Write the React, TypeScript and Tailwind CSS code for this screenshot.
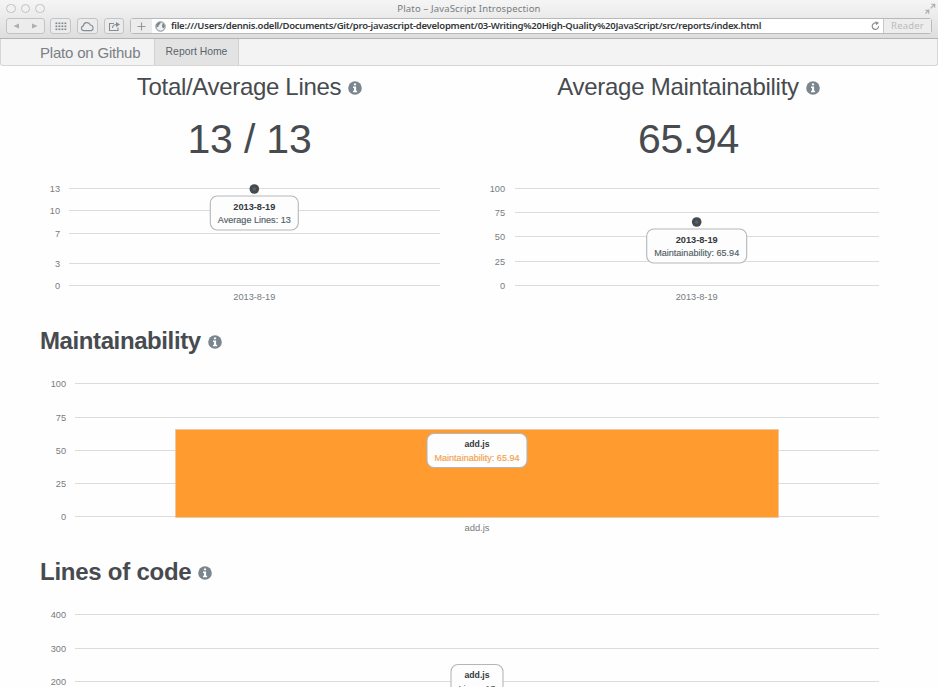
import React from "react";

type Tick = { y: number; label: string };
type Tip = { x: number; y: number; w: number; title: string; text: string; textW: number; titleW: number; color: string };

const SANS = "font-['Liberation_Sans',Arial,sans-serif]";

function Chart(props: {
  width: number;
  height: number;
  labelX: number;
  from: number;
  to: number;
  ticks: Tick[];
  category?: { x: number; y: number; text: string; w: number };
  bar?: { x: number; y: number; w: number; h: number };
  dot?: { x: number; y: number };
  tip: Tip;
}) {
  const { tip } = props;
  return (
    <svg width={props.width} height={props.height} className={`block shrink-0 ${SANS}`}>
      {props.ticks.map((t) => (
        <g key={t.label}>
          <line x1={props.from} x2={props.to} y1={t.y + 0.5} y2={t.y + 0.5} stroke="#dcdcdc" strokeWidth="1.2" />
          <text x={props.labelX} y={t.y + 3.7} textAnchor="end" fontSize="9" fill="#767b7f" textLength={t.label.length * 5.1} lengthAdjust="spacingAndGlyphs">
            {t.label}
          </text>
        </g>
      ))}
      {props.bar && <rect x={props.bar.x} y={props.bar.y} width={props.bar.w} height={props.bar.h} fill="#ff9b2f" stroke="#d8c8b4" strokeWidth="0.5" />}
      {props.dot && (
        <g>
          <circle cx={props.dot.x} cy={props.dot.y} r="4.8" fill="#454a4e" />
          <circle cx={props.dot.x} cy={props.dot.y} r="1.7" fill="#596269" />
        </g>
      )}
      {props.category && (
        <text x={props.category.x} y={props.category.y} textAnchor="middle" fontSize="9" fill="#767b7f" textLength={props.category.w} lengthAdjust="spacingAndGlyphs">
          {props.category.text}
        </text>
      )}
      <rect x={tip.x - tip.w / 2} y={tip.y} width={tip.w} height="34" rx="7" fill="#fdfdfd" stroke="#b4b7b9" strokeWidth="1.1" />
      <text x={tip.x} y={tip.y + 13.8} textAnchor="middle" fontSize="9" fontWeight="bold" fill="#33383c" textLength={tip.titleW} lengthAdjust="spacingAndGlyphs">
        {tip.title}
      </text>
      <text x={tip.x} y={tip.y + 27} textAnchor="middle" fontSize="9" fill={tip.color} stroke={tip.color} strokeWidth="0.15" textLength={tip.textW} lengthAdjust="spacingAndGlyphs">
        {tip.text}
      </text>
    </svg>
  );
}

function Info() {
  return (
    <svg width="14" height="14" viewBox="0 0 14 14" className="mt-[2px] shrink-0">
      <circle cx="7" cy="7" r="6.8" fill="#7b858d" />
      <path d="M5.9 2.4h2.2v1.8H5.9zM5 5.5h3.1v4.3h1v1.4H5V9.8h1V6.9H5z" fill="#fff" />
    </svg>
  );
}

function Button({ width, children }: { width: string; children: React.ReactNode }) {
  return (
    <div className={`flex h-4 items-center justify-center rounded-[3px] border border-[#c3c3c3] bg-[#ececec] ${width}`}>{children}</div>
  );
}

function BrowserChrome() {
  return (
    <header className="h-[39px] shrink-0 border-b border-[#b4b4b4] bg-linear-to-b from-[#f5f5f5] to-[#dedede] font-['Noto_Sans',sans-serif]">
      <div className="flex h-[17px] items-center justify-between pl-[6px] pr-[2px]">
        <div className="flex w-[140px] gap-[5px]">
          <span className="size-[9.5px] rounded-full border border-[#c2c2c2] bg-[#f1f1f1]" />
          <span className="size-[9.5px] rounded-full border border-[#c2c2c2] bg-[#f1f1f1]" />
          <span className="size-[9.5px] rounded-full border border-[#c2c2c2] bg-[#f1f1f1]" />
        </div>
        <div className="-ml-[4px] whitespace-nowrap text-[9.5px] leading-none tracking-[0.16px] text-[#777b7e]">Plato – JavaScript Introspection</div>
        <div className="flex w-[140px] justify-end">
          <svg width="12" height="12" viewBox="0 0 12 12" fill="none" stroke="#aaa" strokeWidth="1.1">
            <path d="M6.7 5.3 10.5 1.5M7.3 1.3h3.4v3.4M5.3 6.7 1.5 10.5M1.3 7.3h3.4v3.4" />
          </svg>
        </div>
      </div>
      <div className="flex h-[18px] items-center pl-[6px] pr-[6px]">
        <div className="flex h-4 w-[39px] items-center rounded-[3px] border border-[#c3c3c3] bg-[#ececec]">
          <svg width="37" height="14" viewBox="0 0 37 14" fill="#aeaeae">
            <path d="M6.5 7l5.5-2.6v5.2zM30.5 7L25 4.4v5.2z" />
          </svg>
        </div>
        <div className="ml-[5px] flex gap-[6px]">
          <Button width="w-[21px]">
            <svg width="12" height="9" viewBox="0 0 12 9" fill="#7d858b">
              {[0, 3, 6].map((y) => [0, 3, 6, 9].map((x) => <rect key={`${x}-${y}`} x={x + 0.5} y={y + 0.5} width="1.8" height="1.6" />))}
            </svg>
          </Button>
          <Button width="w-[21px]">
            <svg width="15" height="11" viewBox="0 0 15 11" fill="none" stroke="#868d92" strokeWidth="1.2">
              <path d="M3.600 9.700a2.500 2.500 0 0 1-.3-4.900A3.700 3.700 0 0 1 10.400 4a3 3 0 0 1 1 5.700z" />
            </svg>
          </Button>
          <Button width="w-[20px]">
            <svg width="13" height="11" viewBox="0 0 13 11" fill="none" stroke="#868d92" strokeWidth="1.1">
              <path d="M6 2.5H1.5v7h8.500V6.500M4.500 7c0-2.200 1.500-3.500 4-3.500" />
              <path d="M8 1l4 2.600L8 6z" fill="#868d92" stroke="none" />
            </svg>
          </Button>
        </div>
        <div className="ml-[6px] flex h-4 min-w-0 flex-1 rounded-[3px] border border-[#b9b9b9] bg-white">
          <div className="flex w-[21px] shrink-0 items-center justify-center bg-[#ececec]">
            <svg width="9" height="9" viewBox="0 0 9 9" stroke="#92979b" strokeWidth="1.1">
              <path d="M4.500 .5v8M.5 4.500h8" />
            </svg>
          </div>
          <div className="flex min-w-0 flex-1 items-center pl-[3px]">
            <svg width="11" height="11" viewBox="0 0 11 11" className="shrink-0">
              <circle cx="5.500" cy="5.500" r="4.700" fill="#eef0f1" stroke="#7c858b" />
              <path d="M1.200 3.600Q2.500.9 5.700 1L5.200 3.200 3.600 4 3.800 5.400 1.700 6.500zM7.500 2l1.700 1.500.6 2-1.500 2-1.300-1.800z" fill="#7c858b" />
            </svg>
            <div className="ml-[5px] whitespace-nowrap text-[9.5px] font-semibold leading-none tracking-[-0.26px] text-[#33383b]">
              file:///Users/dennis.odell/Documents/Git/pro-javascript-development/03-Writing%20High-Quality%20JavaScript/src/reports/index.html
            </div>
          </div>
          <div className="flex w-[16px] items-center justify-center">
            <svg width="9" height="10" viewBox="0 0 9 10" fill="none" stroke="#898e92" strokeWidth="1.200">
              <path d="M7.600 5.200A3.200 3.200 0 1 1 5.800 2.300" />
              <path d="M4.500.2 8 1.800 5.300 4.200z" fill="#898e92" stroke="none" />
            </svg>
          </div>
          <div className="flex w-[48px] items-center justify-center border-l border-[#c8c8c8] bg-[#ededed] text-[9.500px] leading-none tracking-[0.2px] text-[#bbb]">Reader</div>
        </div>
      </div>
    </header>
  );
}

export default function App() {
  return (
    <div className={`flex h-[687px] w-[938px] flex-col overflow-hidden bg-[#fefefe] text-[#474b4f] ${SANS}`}>
      <BrowserChrome />
      <nav className="flex h-[27px] shrink-0 items-stretch rounded-b-[3px] border border-t-0 border-[#d6d6d6] bg-[#f3f3f3] pl-[39px]">
        <div className="flex w-[114px] items-center whitespace-nowrap pt-px text-[15px] leading-none tracking-[-0.2px] text-[#7a8085]">Plato on Github</div>
        <div className="flex w-[85px] items-center justify-center whitespace-nowrap border-x border-[#d0d0d0] bg-[#e3e3e3] text-[10.400px] leading-none text-[#59636b]">
          Report Home
        </div>
      </nav>

      <main className="flex flex-col pl-[40px] pt-[4px]">
        <section className="grid shrink-0 grid-cols-[419px_419px] gap-[20px]">
          <div className="flex flex-col">
            <div className="flex h-[34px] items-center justify-center gap-[7px]">
              <h3 className="whitespace-nowrap text-[24px] leading-none tracking-[-0.32px]">Total/Average Lines</h3>
              <Info />
            </div>
            <div className="flex h-[70px] items-center justify-center text-[41px] leading-none tracking-[-0.2px]">13 / 13</div>
            <Chart
              width={419} height={130} labelX={20} from={29} to={400}
              ticks={[{ y: 14, label: "13" }, { y: 36, label: "10" }, { y: 59, label: "7" }, { y: 89, label: "3" }, { y: 111, label: "0" }]}
              dot={{ x: 214.300, y: 15 }}
              category={{ x: 214.300, y: 125.500, text: "2013-8-19", w: 42 }}
              tip={{ x: 214.300, y: 22, w: 88, title: "2013-8-19", titleW: 42, text: "Average Lines: 13", textW: 73, color: "#515d66" }}
            />
          </div>
          <div className="flex flex-col">
            <div className="flex h-[34px] items-center justify-center gap-[7px]">
              <h3 className="whitespace-nowrap text-[24px] leading-none tracking-[-0.26px]">Average Maintainability</h3>
              <Info />
            </div>
            <div className="flex h-[70px] items-center justify-center text-[41px] leading-none tracking-[-0.3px]">65.94</div>
            <Chart
              width={419} height={130} labelX={26} from={36} to={400}
              ticks={[{ y: 14, label: "100" }, { y: 38, label: "75" }, { y: 62, label: "50" }, { y: 87, label: "25" }, { y: 111, label: "0" }]}
              dot={{ x: 217.700, y: 48 }}
              category={{ x: 217.700, y: 125.500, text: "2013-8-19", w: 42 }}
              tip={{ x: 217.700, y: 55, w: 100, title: "2013-8-19", titleW: 42, text: "Maintainability: 65.94", textW: 85, color: "#515d66" }}
            />
          </div>
        </section>

        <section className="flex shrink-0 flex-col pt-[19px]">
          <div className="flex h-[35px] items-center gap-[7px]">
            <h2 className="whitespace-nowrap text-[24px] font-bold leading-none tracking-[-0.4px]">Maintainability</h2>
            <Info />
          </div>
          <Chart
            width={858} height={178} labelX={26} from={35} to={839}
            ticks={[{ y: 25, label: "100" }, { y: 59, label: "75" }, { y: 92, label: "50" }, { y: 125, label: "25" }, { y: 158, label: "0" }]}
            bar={{ x: 135.500, y: 71.500, w: 603, h: 88 }}
            category={{ x: 437, y: 173, text: "add.js", w: 25 }}
            tip={{ x: 437, y: 75.500, w: 100, title: "add.js", titleW: 25, text: "Maintainability: 65.94", textW: 85, color: "#f2a04b" }}
          />
        </section>

        <section className="flex shrink-0 flex-col pt-[19px]">
          <div className="flex h-[34px] items-center gap-[7px]">
            <h2 className="whitespace-nowrap text-[24px] font-bold leading-none tracking-[-0.25px]">Lines of code</h2>
            <Info />
          </div>
          <Chart
            width={858} height={150} labelX={26} from={35} to={839}
            ticks={[{ y: 25, label: "400" }, { y: 59, label: "300" }, { y: 92, label: "200" }]}
            tip={{ x: 437, y: 75.500, w: 52, title: "add.js", titleW: 25, text: "Lines: 13", textW: 37, color: "#515d66" }}
          />
        </section>
      </main>
    </div>
  );
}
